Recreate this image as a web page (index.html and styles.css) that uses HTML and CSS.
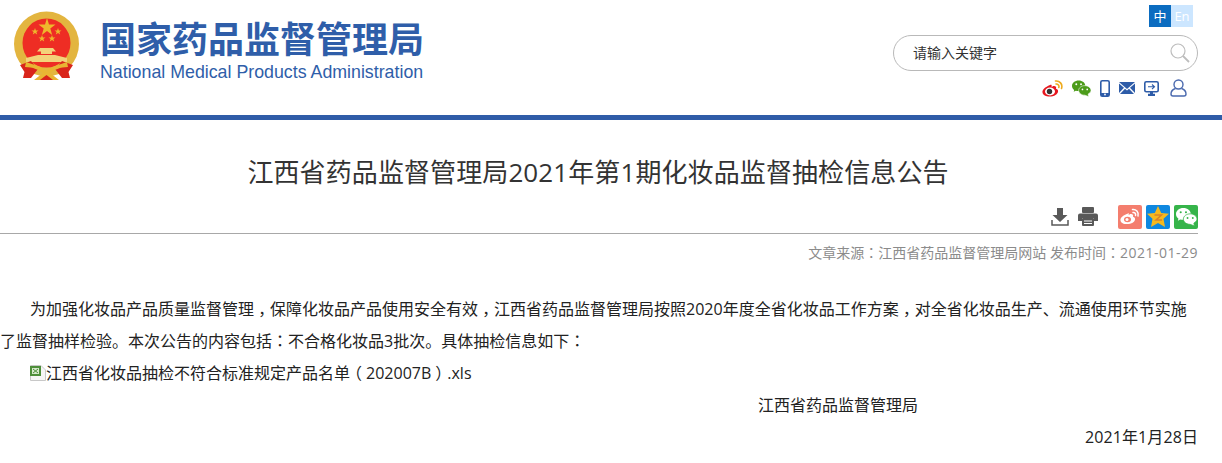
FILE: index.html
```html
<!DOCTYPE html>
<html lang="zh-CN">
<head>
<meta charset="utf-8">
<title>江西省药品监督管理局2021年第1期化妆品监督抽检信息公告</title>
<link rel="stylesheet" href="styles.css">
</head>
<body>
<header class="header">
  <div class="brand">
    <svg class="emblem" width="66" height="69" viewBox="0 0 66 69">
      <circle cx="32.500" cy="33" r="32.500" fill="#e3b53f"/>
      <ellipse cx="32.500" cy="32" rx="24" ry="24.500" fill="#ee2d24"/>
      <polygon points="33,7 35,13.500 41.500,13.500 36.300,17.500 38.200,24 33,20 27.800,24 29.700,17.500 24.500,13.500 31,13.500" fill="#eeb72c"/>
      <polygon points="21,17 21.900,19.400 24.500,19.400 22.400,21 23.200,23.500 21,22 18.800,23.500 19.600,21 17.500,19.400 20.100,19.400" fill="#eeb72c"/>
      <polygon points="44,17 44.900,19.400 47.500,19.400 45.400,21 46.200,23.500 44,22 41.800,23.500 42.600,21 40.500,19.400 43.100,19.400" fill="#eeb72c"/>
      <polygon points="28,24 28.900,26.400 31.500,26.400 29.400,28 30.200,30.500 28,29 25.800,30.500 26.600,28 24.500,26.400 27.100,26.400" fill="#eeb72c"/>
      <polygon points="38,24 38.900,26.400 41.500,26.400 39.400,28 40.200,30.500 38,29 35.800,30.500 36.600,28 34.500,26.400 37.100,26.400" fill="#eeb72c"/>
      <path d="M26 37 H39 L42 40.500 H38 V43 H27 V40.500 H23Z" fill="#f3d27a"/>
      <path d="M24 44 H41 L53 47 V51 H12 V47Z" fill="#f3d27a"/>
      <path d="M6 54 L17 50 L24 58 L17 67 L9 67 L10.500 61Z" fill="#d9251b"/>
      <path d="M59 54 L48 50 L41 58 L48 67 L56 67 L54.500 61Z" fill="#d9251b"/>
      <path d="M12 51 C20 54 27 55 32.500 60 C38 55 45 54 53 51 L54 56 C46 56 40 59 36 62 L45 69 H20 L29 62 C25 59 19 56 11 56Z" fill="#e9b533"/>
      <path d="M26 69 L32.500 64 L39 69Z" fill="#d9251b"/>
    </svg>
    <div class="brand-text">
      <div class="brand-cn">国家药品监督管理局</div>
      <div class="brand-en">National Medical Products Administration</div>
    </div>
  </div>
  <div class="tools">
    <div class="lang"><span class="lang-cn">中</span><span class="lang-en">En</span></div>
    <div class="search">
      <span class="search-text">请输入关键字</span>
      <svg class="search-icon" width="20" height="20" viewBox="0 0 20 20" fill="none" stroke="#bdbdbd">
        <circle cx="8" cy="8" r="7" stroke-width="1.200"/>
        <path d="M13 13 L19 19" stroke-width="1.800"/>
      </svg>
    </div>
    <div class="links">
      <svg width="21" height="17" viewBox="0 0 21 17">
        <path d="M8 5 C3 7 0 10 0.500 12.500 C1 15.500 5 17 9 16.500 C14 16 16.500 13 16 10.500 C15.800 9.500 14.500 9 14 8.800 C14.500 7.500 14.200 6 12 6 C11 6 10 6.800 9.500 6.800 C10 5 9.500 4.500 8 5Z" fill="#e6161e"/>
        <ellipse cx="8" cy="11.500" rx="5" ry="3.900" fill="#fff"/>
        <circle cx="7.500" cy="11.500" r="2.700" fill="#333"/>
        <path d="M13.500 1 C17.500 .5 21 4 19.500 8.500 M14 4 C16 3.800 17.500 5.500 16.800 7.500" fill="none" stroke="#eeaa1c" stroke-width="1.600" stroke-linecap="round"/>
      </svg>
      <svg width="19" height="17" viewBox="0 0 20 17">
        <path d="M7 0 C3 0 0 2.500 0 5.800 C0 7.500 1 9 2.300 10 L1.800 12 L4 10.800 C5 11.100 6 11.200 7 11.200 C11 11.200 14 8.600 14 5.500 C14 2.500 11 0 7 0Z" fill="#4c9c1a"/>
        <path d="M13.500 5.500 C10 5.500 7 7.700 7 10.500 C7 13.300 10 15.500 13.500 15.500 L17.500 17 L17 14.300 C18.700 13.300 20 12 20 10.500 C20 7.700 17 5.500 13.500 5.500Z" fill="#4c9c1a" stroke="#fff" stroke-width=".6"/>
        <circle cx="4.500" cy="4" r="1" fill="#fff"/><circle cx="9.500" cy="4" r="1" fill="#fff"/>
        <circle cx="11" cy="9.500" r=".9" fill="#fff"/><circle cx="16" cy="9.500" r=".9" fill="#fff"/>
      </svg>
      <svg class="phone" width="10" height="17" viewBox="0 0 10 17">
        <rect x=".8" y=".8" width="8.400" height="15.400" rx="1.500" fill="none" stroke="#2e5ca8" stroke-width="1.600"/>
        <rect x="1" y="13" width="8" height="3" fill="#2e5ca8"/>
        <circle cx="5" cy="14.500" r=".9" fill="#fff"/>
      </svg>
      <svg width="16" height="12" viewBox="0 0 16 12">
        <path d="M0 0 H16 L8 7Z M0 1.500 L5 5.800 L0 11Z M16 1.500 L11 5.800 L16 11Z M1 12 L6 6.800 L8 8.500 L10 6.800 L15 12Z" fill="#2e5ca8"/>
      </svg>
      <svg width="15" height="15" viewBox="0 0 15 15">
        <rect x=".8" y=".8" width="13.400" height="10" rx="1.500" fill="none" stroke="#2e5ca8" stroke-width="1.600"/>
        <path d="M6 11 H9 V12.800 H11 V15 H4 V12.800 H6Z" fill="#2e5ca8"/>
        <path d="M4 5.800 H10 M8 3.500 L10.500 5.800 L8 8" fill="none" stroke="#2e5ca8" stroke-width="1.100"/>
      </svg>
      <svg class="user" width="17" height="18" viewBox="0 0 17 18" fill="none" stroke="#4a69ae" stroke-width="1.400">
        <circle cx="8.500" cy="5.500" r="4.500"/>
        <path d="M5.500 9.500 C2.500 10.500 1 13 1 15 C1 16.500 2 17 3 17 H14 C15 17 16 16.500 16 15 C16 13 14.500 10.500 11.500 9.500"/>
      </svg>
    </div>
  </div>
</header>
<div class="bar"></div>
<main class="article">
  <h1 class="title">江西省药品监督管理局2021年第1期化妆品监督抽检信息公告</h1>
  <div class="actions">
    <svg width="18" height="18" viewBox="0 0 18 18">
      <path d="M6 0 H12 V7 H16.500 L9 14 L1.500 7 H6Z" fill="#595959"/>
      <path d="M1 12 V17 H17 V12" fill="none" stroke="#595959" stroke-width="1.500"/>
    </svg>
    <svg class="print" width="20" height="19" viewBox="0 0 20 19">
      <rect x="4" y="0" width="12" height="6" rx="1" fill="#595959"/>
      <path d="M2 6.500 H18 Q20 6.500 20 8.500 V14 H16 V11 H4 V14 H0 V8.500 Q0 6.500 2 6.500Z" fill="#595959"/>
      <rect x="4" y="11" width="12" height="8" rx="1" fill="#595959"/>
      <path d="M6 14 H14 M6 16.500 H14" stroke="#fff"/>
    </svg>
    <span class="share share-weibo">
      <svg width="20" height="17" viewBox="0 0 20 17">
        <path d="M8 5.500 C3 7 0 10 0.500 12.500 C1 15.500 5 16.500 8.500 16 C13 15.500 15.500 13 15 10.500 C14.800 9.500 13.500 9 13 8.800 C13.500 7.500 13.200 6 11 6 C10 6 9 6.800 8.500 6.800 C9 5.500 9 5 8 5.500Z" fill="#fff"/>
        <ellipse cx="7.500" cy="11.500" rx="3.500" ry="2.800" fill="#f47e6e"/>
        <circle cx="7" cy="11.500" r="1.500" fill="#fff"/>
        <path d="M12.500 1.500 C16 1 19 4 18 8 M13 4.500 C15 4.300 16 5.500 15.500 7.500" fill="none" stroke="#fff" stroke-width="1.500" stroke-linecap="round"/>
      </svg>
    </span>
    <span class="share share-qzone">
      <svg width="22" height="21" viewBox="0 0 22 21">
        <polygon points="11,0 14.200,7 22,7.800 16.500,12.800 18,21 11,17 4,21 5.500,12.800 0,7.800 7.800,7" fill="#f6b91e"/>
        <path d="M7.500 9 H14.500 L9 14 H15" fill="none" stroke="#d9822b" stroke-width="1.500"/>
      </svg>
    </span>
    <span class="share share-wechat">
      <svg width="21" height="18" viewBox="0 0 20 17">
        <path d="M7 0 C3 0 0 2.500 0 5.800 C0 7.500 1 9 2.300 10 L1.800 12 L4 10.800 C5 11.100 6 11.200 7 11.200 C11 11.200 14 8.600 14 5.500 C14 2.500 11 0 7 0Z" fill="#fff"/>
        <path d="M13.500 5.500 C10 5.500 7 7.700 7 10.500 C7 13.300 10 15.500 13.500 15.500 L17.500 17 L17 14.300 C18.700 13.300 20 12 20 10.500 C20 7.700 17 5.500 13.500 5.500Z" fill="#fff" stroke="#36b44a" stroke-width=".7"/>
        <circle cx="4.500" cy="4" r="1" fill="#36b44a"/><circle cx="9.500" cy="4" r="1" fill="#36b44a"/>
        <circle cx="11" cy="9.500" r=".9" fill="#36b44a"/><circle cx="16" cy="9.500" r=".9" fill="#36b44a"/>
      </svg>
    </span>
  </div>
  <div class="meta">文章来源<span class="pn" lang="zh-TW">：</span>江西省药品监督管理局网站 发布时间<span class="pn" lang="zh-TW">：</span><span class="meta-date">2021-01-29</span></div>
  <div class="content">
    <p class="para"><span class="line-first">为加强化妆品产品质量监督管理<span class="pn pn-low" lang="zh-TW">，</span>保障化妆品产品使用安全有效<span class="pn pn-low" lang="zh-TW">，</span>江西省药品监督管理局按照2020年度全省化妆品工作方案<span class="pn pn-low" lang="zh-TW">，</span>对全省化妆品生产、流通使用环节实施</span><br>了监督抽样检验。本次公告的内容包括<span class="pn" lang="zh-TW">：</span>不合格化妆品3批次。具体抽检信息如下<span class="pn" lang="zh-TW">：</span></p>
    <p class="file">
      <svg class="file-icon" width="16" height="16" viewBox="0 0 16 16">
        <path d="M.5 .5 H11 L15.500 5 V15.500 H.5Z" fill="#f6f6f6" stroke="#c8c8c8"/>
        <rect x="0" y="1" width="11" height="10" fill="#4e8f3a"/>
        <path d="M2 3 H9 V9 H2Z" fill="#d6e8cc"/>
        <path d="M3 4 L8 8 M8 4 L3 8" stroke="#4e8f3a"/>
      </svg><span>江西省化妆品抽检不符合标准规定产品名单<span class="paren">（</span>202007B<span class="paren">）</span>.xls</span>
    </p>
    <p class="sign">江西省药品监督管理局</p>
    <p class="date">2021年1月28日</p>
  </div>
</main>
</body>
</html>
```
FILE: styles.css
```css
* { box-sizing: border-box; }
html, body { margin: 0; padding: 0; }
body {
  width: 1222px;
  height: 463px;
  overflow: hidden;
  background: #fff;
  color: #333;
  font-family: "Open Sans", "Noto Sans CJK SC", "Liberation Sans", sans-serif;
}
.pn { font-family: "Noto Sans CJK TC", sans-serif; line-height: 1; }
.pn-low { vertical-align: -.3em; }
.paren { line-height: 1; font-feature-settings: "halt"; padding: 0 4px; }
.header {
  height: 115px;
  display: flex;
  justify-content: space-between;
  padding: 11px 24px 0 14px;
}
.brand { display: flex; gap: 20px; align-items: flex-start; }
.emblem { display: block; }
.brand-text { padding-top: 5px; }
.brand-cn {
  font-family: "Noto Sans CJK SC", sans-serif;
  font-size: 36px;
  line-height: 42px;
  font-weight: 700;
  color: #2f5ea9;
  white-space: nowrap;
}
.brand-en {
  font-family: "Liberation Sans", sans-serif;
  font-size: 17.800px;
  line-height: 22px;
  color: #2f5ea9;
  margin-top: 3px;
  white-space: nowrap;
}
.tools { width: 305px; display: flex; flex-direction: column; margin-top: -6px; }
.lang { display: flex; justify-content: flex-end; padding-right: 5px; height: 22px; }
.lang span {
  width: 22px;
  height: 22px;
  font-size: 13px;
  line-height: 22px;
  text-align: center;
  color: #fff;
}
.lang-cn { background: #0b6cc0; }
.lang-en { background: #cce6ff; }
.search {
  margin-top: 8px;
  height: 36px;
  border: 1px solid #b9b9b9;
  border-radius: 18px;
  display: flex;
  align-items: center;
  justify-content: space-between;
  padding: 0 7px 0 19px;
}
.search-text { font-family: "Noto Sans CJK SC", sans-serif; font-size: 14px; line-height: 20px; padding-bottom: 2px; color: #333; }
.search-icon { display: block; }
.links {
  margin-top: 8px;
  display: flex;
  justify-content: flex-end;
  align-items: center;
  gap: 9px;
  padding-right: 11px;
}
.user { margin-left: 2px; }
.bar { height: 5px; background: #2f5ca8; }
.article { width: 1198px; }
.title {
  margin: 0;
  padding: 35px 2px 0 0;
  font-size: 26px;
  line-height: 34px;
  font-weight: 400;
  letter-spacing: .1px;
  text-align: center;
  color: #333;
}
.actions {
  display: flex;
  justify-content: flex-end;
  align-items: center;
  margin-top: 14px;
  height: 27px;
  gap: 4px;
}
.print { margin: 0 16px 0 5px; }
.share {
  width: 24px;
  height: 24px;
  border-radius: 2px;
  display: flex;
  align-items: center;
  justify-content: center;
}
.share-weibo { background: #f47e6e; }
.share-qzone { background: #0f88e0; }
.share-wechat { background: #36b44a; }
.meta {
  margin-top: 3px;
  border-top: 1px solid #a8a8a8;
  padding-top: 7px;
  text-align: right;
  font-size: 14px;
  line-height: 24px;
  color: #8b8b8b;
}
.meta-date { letter-spacing: .5px; }
.content { padding-top: 28px; font-size: 16px; line-height: 32px; color: #222; }
.content p { margin: 0; }
.para { text-indent: 30px; white-space: nowrap; }
.file { padding-left: 30px; display: flex; align-items: center; }
.file-icon { flex: none; }
.sign { padding-left: 758px; }
.date { text-align: right; letter-spacing: .1px; }
```
